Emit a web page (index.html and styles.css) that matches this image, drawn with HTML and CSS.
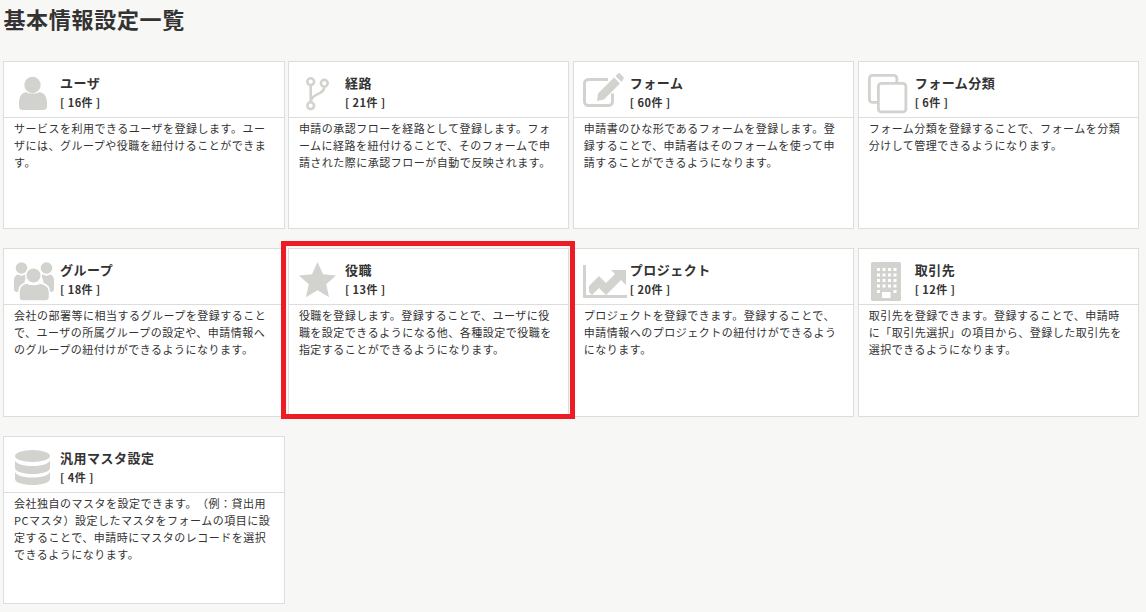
FILE: index.html
```html
<!DOCTYPE html>
<html lang="ja">
<head>
<meta charset="utf-8">
<title>基本情報設定一覧</title>
<link rel="stylesheet" href="styles.css">
</head>
<body>
<h1 class="page-title">基本情報設定一覧</h1>
<div class="grid">
  <section class="card">
    <header class="card-head">
      <svg class="icon" viewBox="0 0 48 48"><circle cx="23.500" cy="16" r="8.200"/><path d="M10 34c0-7 3-10 7-11 2 2 11 2 13.500 0 4.500 1 7.500 4 7.500 11v3c0 3-1.500 4-4 4H14c-2.500 0-4-1-4-4z"/></svg>
      <div class="head-text"><h2 class="card-title">ユーザ</h2><p class="card-count">[ 16件 ]</p></div>
    </header>
    <p class="card-body">サービスを利用できるユーザを登録します。ユーザには、グループや役職を紐付けることができます。</p>
  </section>
  <section class="card">
    <header class="card-head">
      <svg class="icon" viewBox="0 0 48 48"><g class="line" stroke-width="2.600"><circle cx="16.700" cy="12.700" r="3.400"/><circle cx="16.700" cy="36.700" r="3.400"/><circle cx="30.300" cy="14.300" r="3.400"/><path d="M16.700 16v17.500M30.300 17.700c0 9-13.600 6-13.600 15.800"/></g></svg>
      <div class="head-text"><h2 class="card-title">経路</h2><p class="card-count">[ 21件 ]</p></div>
    </header>
    <p class="card-body">申請の承認フローを経路として登録します。フォームに経路を紐付けることで、そのフォームで申請された際に承認フローが自動で反映されます。</p>
  </section>
  <section class="card">
    <header class="card-head">
      <svg class="icon" viewBox="0 0 48 48"><path class="line" stroke-width="3" d="M29 10.500H9.500a4 4 0 0 0-4 4v18a4 4 0 0 0 4 4h20a4 4 0 0 0 4-4v-8"/><path d="M19 24.500 35 8.500l6 6-16 16-7 1.500zM36.500 7l2.500-2.500a1.500 1.500 0 0 1 2 0l3.500 3.500a1.500 1.500 0 0 1 0 2L42.500 13z"/></svg>
      <div class="head-text"><h2 class="card-title">フォーム</h2><p class="card-count">[ 60件 ]</p></div>
    </header>
    <p class="card-body">申請書のひな形であるフォームを登録します。登録することで、申請者はそのフォームを使って申請することができるようになります。</p>
  </section>
  <section class="card">
    <header class="card-head">
      <svg class="icon" viewBox="0 0 48 48"><g class="line" stroke-width="2.800"><rect x="5.400" y="6.400" width="27.500" height="27" rx="3"/><rect class="paper" x="14.400" y="14.400" width="27.500" height="28.500" rx="3"/></g></svg>
      <div class="head-text"><h2 class="card-title">フォーム分類</h2><p class="card-count">[ 6件 ]</p></div>
    </header>
    <p class="card-body">フォーム分類を登録することで、フォームを分類分けして管理できるようになります。</p>
  </section>
  <section class="card">
    <header class="card-head">
      <svg class="icon" viewBox="0 0 48 48"><circle cx="12.500" cy="12" r="5.800"/><circle cx="37.500" cy="12" r="5.800"/><path d="M5 24c0-3.500 2-5 4-5.500 2 1.500 5 1.500 7 0 1 .3 2 .8 2.500 1.500-2 2-3 4-3 7-3 1-6 4-6 9H8c-2 0-3-1-3-3zM45 24c0-3.500-2-5-4-5.500-2 1.500-5 1.500-7 0-1 .3-2 .8-2.500 1.500 2 2 3 4 3 7 3 1 6 4 6 9H42c2 0 3-1 3-3z"/><circle class="ring" cx="24.500" cy="19.500" r="7.800"/><path class="ring" d="M10 36c0-5 3-8 7.500-9 3 2 10 2 14 0 5 1 9 4 9 9v5c0 3-1.500 4-4 4H14c-2.500 0-4-1-4-4z"/></svg>
      <div class="head-text"><h2 class="card-title">グループ</h2><p class="card-count">[ 18件 ]</p></div>
    </header>
    <p class="card-body">会社の部署等に相当するグループを登録することで、ユーザの所属グループの設定や、申請情報へのグループの紐付けができるようになります。</p>
  </section>
  <section class="card">
    <header class="card-head">
      <svg class="icon" viewBox="0 0 48 48"><path d="M23.500 6 29 18.300l13 1.200-9.800 8.700 2.900 13-11.600-6.900-11.600 6.900 2.900-13L5 19.500l13-1.200z"/></svg>
      <div class="head-text"><h2 class="card-title">役職</h2><p class="card-count">[ 13件 ]</p></div>
    </header>
    <p class="card-body">役職を登録します。登録することで、ユーザに役職を設定できるようになる他、各種設定で役職を指定することができるようになります。</p>
  </section>
  <section class="card">
    <header class="card-head">
      <svg class="icon" viewBox="0 0 48 48"><path d="M4 9h3v30h41v3H4z"/><path d="M10 36v-6l10-10 7 7 9-9-4-4h15v15l-5-5-15 15-7-7-7 7z"/></svg>
      <div class="head-text"><h2 class="card-title">プロジェクト</h2><p class="card-count">[ 20件 ]</p></div>
    </header>
    <p class="card-body">プロジェクトを登録できます。登録することで、申請情報へのプロジェクトの紐付けができるようになります。</p>
  </section>
  <section class="card">
    <header class="card-head">
      <svg class="icon" viewBox="0 0 48 48"><rect x="7" y="6" width="30" height="39" rx="1.500"/><path class="hole" d="M13 12h3v3h-3zM18.500 12h3v3h-3zM24 12h3v3h-3zM29.500 12h3v3h-3zM13 17.500h3v3h-3zM18.500 17.500h3v3h-3zM24 17.500h3v3h-3zM29.500 17.500h3v3h-3zM13 23h3v3h-3zM18.500 23h3v3h-3zM24 23h3v3h-3zM29.500 23h3v3h-3zM13 28.500h3v3h-3zM18.500 28.500h3v3h-3zM24 28.500h3v3h-3zM29.500 28.500h3v3h-3zM13 34h3v3h-3zM29.500 34h3v3h-3zM18 36h8.500v6H18z"/></svg>
      <div class="head-text"><h2 class="card-title">取引先</h2><p class="card-count">[ 12件 ]</p></div>
    </header>
    <p class="card-body">取引先を登録できます。登録することで、申請時に「取引先選択」の項目から、登録した取引先を選択できるようになります。</p>
  </section>
  <section class="card">
    <header class="card-head">
      <svg class="icon" viewBox="0 0 48 48"><ellipse cx="23.500" cy="12" rx="17.500" ry="6"/><path d="M6 16.500c2 4 9 5.500 17.500 5.500s15.500-1.500 17.500-5.500V24c0 3.500-8 6-17.500 6S6 27.500 6 24zM6 28c2 4 9 5.500 17.500 5.500S39 32 41 28v7c0 3.500-8 6-17.500 6S6 38.500 6 35z"/></svg>
      <div class="head-text"><h2 class="card-title">汎用マスタ設定</h2><p class="card-count">[ 4件 ]</p></div>
    </header>
    <p class="card-body">会社独自のマスタを設定できます。（例：貸出用PCマスタ）設定したマスタをフォームの項目に設定することで、申請時にマスタのレコードを選択できるようになります。</p>
  </section>
</div>
<div class="highlight"></div>
</body>
</html>
```
FILE: styles.css
```css
* { box-sizing: border-box; }
html, body { height: 100%; }
body {
  margin: 0;
  padding: 0 0 0 3.4px;
  position: relative;
  overflow: hidden;
  background: #f7f7f5;
  color: #333;
  font-family: "Noto Sans CJK JP", "Noto Sans", sans-serif;
  letter-spacing: .5px;
  text-spacing-trim: space-all;
}
.page-title {
  margin: 0;
  height: 60.6px;
  font-size: 22px;
  line-height: 37px;
  font-weight: 700;
  letter-spacing: .7px;
}
.grid {
  display: grid;
  grid-template-columns: repeat(4, 281.15px);
  grid-auto-rows: 168.5px;
  column-gap: 3.75px;
  row-gap: 19px;
}
.card {
  background: #fff;
  border: 1px solid #ddd;
}
.card-head {
  display: flex;
  height: 56px;
  border-bottom: 1px solid #ddd;
}
.icon {
  width: 48px;
  height: 48px;
  margin: 7px 2.6px 0 5px;
  flex: none;
  fill: #d2d3ce;
}
.line { fill: none; stroke: #d2d3ce; }
.paper { fill: #fff; }
.ring { stroke: #fff; stroke-width: 1.500; }
.hole { fill: #fff; }
.head-text { padding-top: 11px; }
.card-title {
  margin: 0;
  font-size: 13px;
  line-height: 20px;
  font-weight: 700;
}
.card-count {
  margin: .4px 0 0;
  font-size: 11px;
  line-height: 19.6px;
  font-weight: 700;
}
.card-body {
  margin: 0;
  padding: 2.4px 10px 0 9.6px;
  font-size: 11px;
  line-height: 17px;
  line-break: loose;
}
.highlight {
  position: absolute;
  left: 281px;
  top: 241px;
  width: 294px;
  height: 178px;
  border: 5px solid #ed1c24;
}
```
